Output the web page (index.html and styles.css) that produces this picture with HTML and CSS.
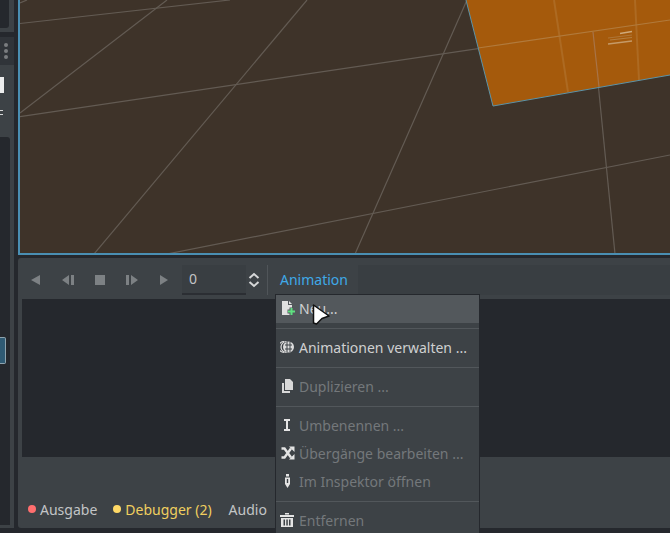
FILE: index.html
```html
<!DOCTYPE html>
<html lang="de">
<head>
    <meta charset="UTF-8">
    <title>Animation</title>
    <link rel="stylesheet" href="styles.css">
</head>
<body>
    <div class="app">
        <div class="left-dock">
            <div class="dock-top"><div class="dock-top-inner"></div></div>
            <div class="dock-tabs">
                <span class="dot"></span><span class="dot"></span><span class="dot"></span>
            </div>
            <div class="dock-body">
                <div class="dock-white"></div>
                <div class="dock-glyph"></div>
                <div class="dock-tree">
                    <div class="dock-selected"></div>
                </div>
            </div>
        </div>

        <div class="main">
            <div class="viewport">
                <svg class="viewport-svg" width="650" height="253" viewBox="20 0 650 253">
                    <g stroke="#635b53" stroke-width="1.200" fill="none">
                        <line x1="20" y1="23.5" x2="230" y2="0"/>
                        <line x1="20" y1="3" x2="27" y2="0"/>
                        <line x1="20" y1="113" x2="167" y2="0"/>
                        <line x1="20" y1="116.7" x2="670" y2="20"/>
                        <line x1="94" y1="254" x2="307" y2="0"/>
                        <line x1="355" y1="254" x2="467" y2="0"/>
                        <line x1="167" y1="254" x2="670" y2="155"/>
                        <line x1="593" y1="32" x2="615" y2="254"/>
                    </g>
                    <polygon points="466,0 670,0 670,75 493,106" fill="#a55a0c"/>
                    <g fill="none">
                        <line x1="554" y1="0" x2="568" y2="92" stroke="#ad6a22" stroke-width="2"/>
                        <line x1="635" y1="0" x2="639" y2="80" stroke="#ad6a22" stroke-width="2"/>
                        <line x1="478" y1="48" x2="670" y2="20" stroke="#b17a3c" stroke-width="1.200"/>
                        <line x1="593" y1="32" x2="599" y2="87" stroke="#a87448" stroke-width="1.200"/>
                        <polyline points="466,0 493,106 670,75" stroke="#5c93a8"/>
                        <line x1="620" y1="33.5" x2="632" y2="31.5" stroke="#cfa97a" stroke-width="1.500"/>
                        <line x1="608" y1="38" x2="632" y2="35" stroke="#b07c42" stroke-width=".8"/>
                        <line x1="610" y1="40" x2="632" y2="37.5" stroke="#b8884e" stroke-width=".8"/>
                        <line x1="608" y1="44" x2="632" y2="41" stroke="#c59a68" stroke-width="1.500"/>
                    </g>
                </svg>
            </div>

            <div class="bottom-panel">
                <div class="toolbar">
                    <span class="tool-btn">
                        <svg width="12" height="12" viewBox="0 0 12 12"><path d="M10 1v10L1 6z"/></svg>
                    </span>
                    <span class="tool-btn">
                        <svg width="14" height="12" viewBox="0 0 14 12"><path d="M8 1v10L1 6zM10 1h3v10h-3z"/></svg>
                    </span>
                    <span class="tool-btn">
                        <svg width="10" height="10" viewBox="0 0 10 10"><rect width="10" height="10"/></svg>
                    </span>
                    <span class="tool-btn">
                        <svg width="14" height="12" viewBox="0 0 14 12"><path d="M1 1h3v10H1zM6 1l7 5-7 5z"/></svg>
                    </span>
                    <span class="tool-btn">
                        <svg width="10" height="12" viewBox="0 0 10 12"><path d="M1 1v10l8-5z"/></svg>
                    </span>
                    <div class="spinbox">0</div>
                    <svg class="spin-arrows" width="12" height="16" viewBox="0 0 12 16">
                        <path d="M1.500 6L6 2l4.500 4M1.500 10L6 14l4.500-4" fill="none" stroke="#d6d7d8" stroke-width="2"/>
                    </svg>
                    <div class="tool-sep"></div>
                    <div class="anim-tab">Animation</div>
                    <div class="tool-fill"></div>
                </div>
                <div class="log-area"></div>
                <div class="tabs">
                    <span class="tab"><i class="tab-dot tab-dot-red"></i>Ausgabe</span>
                    <span class="tab tab-warn"><i class="tab-dot tab-dot-yellow"></i>Debugger (2)</span>
                    <span class="tab">Audio</span>
                </div>
            </div>
        </div>

        <div class="menu">
            <div class="menu-item menu-item-hover">
                <svg width="14" height="16" viewBox="0 0 14 16">
                    <path d="M1 1h6v4h4v10H1z" fill="#e0e0e0"/>
                    <path d="M8 1l3 3H8z" fill="#e0e0e0"/>
                    <path d="M6.500 11.500h8M10.500 7.500v8" stroke="#53585c" stroke-width="4"/>
                    <path d="M7 11.500h7M10.500 8v7" stroke="#5fe080" stroke-width="2"/>
                </svg>
                <span>Neu...</span>
            </div>
            <div class="menu-sep"></div>
            <div class="menu-item">
                <svg class="icon-left" width="14" height="14" viewBox="0 0 14 14">
                    <g fill="none" stroke="#dcdcdc" stroke-width="1.200">
                        <path d="M4 1.500A5.500 5.500 0 0 0 4 12.500"/>
                        <path d="M6.500 1.500A5.500 5.500 0 0 0 6.500 12.500"/>
                    </g>
                    <circle cx="8.500" cy="7" r="5.500" fill="#dcdcdc"/>
                    <path d="M5 5h7M5 9h7M7 2v10M10 2v10" stroke="#3d4246" fill="none"/>
                </svg>
                <span>Animationen verwalten ...</span>
            </div>
            <div class="menu-sep"></div>
            <div class="menu-item menu-item-off">
                <svg class="icon-left" width="14" height="14" viewBox="0 0 14 14" fill="#d8d8d8">
                    <path d="M5 0h5l3 3v8H5z"/>
                    <path d="M2 4h2v8h6v2H2z"/>
                </svg>
                <span>Duplizieren ...</span>
            </div>
            <div class="menu-sep"></div>
            <div class="menu-item menu-item-off">
                <svg class="icon-left" width="14" height="14" viewBox="0 0 14 14" fill="#e4e4e4">
                    <path d="M4 1h6v2H8v8h2v2H4v-2h2V3H4z"/>
                </svg>
                <span>Umbenennen ...</span>
            </div>
            <div class="menu-item menu-item-off">
                <svg width="14" height="14" viewBox="0 0 14 14" fill="none" stroke="#e4e4e4" stroke-width="2.400">
                    <path d="M0.500 2.500h3l6.500 9M0.500 11.500h3l6.500-9"/>
                    <path d="M8 0.500h5.500V6zM8 13.500h5.500V8z" fill="#e4e4e4" stroke="none"/>
                </svg>
                <span>Übergänge bearbeiten ...</span>
            </div>
            <div class="menu-item menu-item-off">
                <svg class="icon-left" width="14" height="14" viewBox="0 0 14 14" fill="#e4e4e4">
                    <rect x="6" y="0" width="3" height="2.500"/>
                    <path d="M5 3.500h5v6.500L7.500 14 5 10z"/>
                    <rect x="6.800" y="5" width="1.400" height="4" fill="#3d4246"/>
                </svg>
                <span>Im Inspektor öffnen</span>
            </div>
            <div class="menu-sep"></div>
            <div class="menu-item menu-item-off">
                <svg class="icon-left" width="14" height="14" viewBox="0 0 14 14" fill="#e4e4e4">
                    <path d="M0 2h14v2H0zM5 0h4v1.500H5z"/>
                    <path d="M1 5h12v9H1zM3.500 6.500v6h1.500v-6zM6.300 6.500v6h1.500v-6zM9 6.500v6h1.500v-6z" fill-rule="evenodd"/>
                </svg>
                <span>Entfernen</span>
            </div>
        </div>

        <svg class="cursor" width="22" height="24" viewBox="0 0 22 24">
            <path d="M2.500 2L18 13l-7 2.500L5.500 21 2.500 20z" fill="#fff" stroke="#111" stroke-width="1.500" stroke-linejoin="round"/>
        </svg>
    </div>
</body>
</html>
```

FILE: styles.css
```css
* {
    box-sizing: border-box;
}

html, body {
    margin: 0;
    padding: 0;
    height: 100%;
    overflow: hidden;
}

body {
    background-color: #25282d;
    font-family: "Noto Sans", sans-serif;
    font-size: 14px;
    color: #d6d7d8;
}

.app {
    display: flex;
    position: relative;
    height: 533px;
    overflow: hidden;
}

/* left dock, mostly cut off by the crop */
.left-dock {
    width: 14px;
    height: 528px;
    flex-shrink: 0;
    display: flex;
    flex-direction: column;
}

.dock-top {
    height: 32px;
    background-color: #3d4246;
    padding-right: 5px;
    padding-bottom: 4px;
}

.dock-top-inner {
    height: 100%;
    background-color: #25282d;
    border-bottom-right-radius: 3px;
}

.dock-tabs {
    height: 28px;
    margin-top: 5px;
    background-color: #303439;
    display: flex;
    flex-direction: column;
    align-items: flex-end;
    justify-content: center;
    gap: 2px;
    padding-right: 6px;
}

.dot {
    width: 4px;
    height: 4px;
    border-radius: 50%;
    background-color: #7a7d80;
}

.dock-body {
    flex: 1;
    background-color: #3d4246;
    display: flex;
    flex-direction: column;
}

.dock-white {
    width: 4px;
    height: 16px;
    margin-top: 12px;
    background-color: #eceded;
}

.dock-glyph {
    width: 3px;
    height: 5px;
    margin-top: 17px;
    border-top: 1px solid #d6d7d8;
    border-bottom: 1px solid #d6d7d8;
}

.dock-tree {
    position: relative;
    width: 10px;
    height: 388px;
    margin-top: 22px;
    background-color: #25282d;
    border-top-right-radius: 3px;
}

.dock-selected {
    position: absolute;
    top: 200px;
    left: 0;
    width: 6px;
    height: 27px;
    background-color: #2f5a73;
    border: 1px solid #8ea3ae;
    border-left: none;
    border-radius: 0 2px 2px 0;
}

.main {
    flex: 1;
    margin-left: 4px;
    min-width: 0;
}

.viewport {
    height: 255px;
    background-color: #3e3329;
    border-left: 2px solid #4a8fb3;
    border-bottom: 2px solid #4a8fb3;
}

.viewport-svg {
    display: block;
}

.bottom-panel {
    height: 270px;
    margin-top: 3px;
    background-color: #3d4246;
    border-radius: 3px 0 0 3px;
}

.toolbar {
    height: 41px;
    padding: 7px 0 4px 2px;
    display: flex;
    align-items: center;
}

.tool-btn {
    width: 32px;
    height: 30px;
    display: flex;
    align-items: center;
    justify-content: center;
}

.tool-btn svg {
    fill: #7d8184;
}

.spinbox {
    width: 64px;
    height: 30px;
    margin-left: 2px;
    padding: 4px 7px 0;
    background-color: #393e42;
    border-bottom: 2px solid #2b2e33;
    color: #c2c4c5;
    font-size: 14px;
}

.spin-arrows {
    margin-left: 2px;
}

.tool-sep {
    width: 1px;
    height: 30px;
    margin-left: 7px;
    background-color: #505559;
}

.anim-tab {
    width: 90px;
    height: 30px;
    line-height: 30px;
    padding-left: 12px;
    color: #3fa9e8;
}

.tool-fill {
    flex: 1;
    height: 30px;
    background-color: #393e42;
}

.log-area {
    height: 158px;
    margin-left: 4px;
    background-color: #25282d;
}

.tabs {
    height: 71px;
    padding: 33px 0 0 10px;
    display: flex;
    align-items: center;
    gap: 16px;
    color: #c3c5c6;
}

.tab {
    display: flex;
    align-items: center;
    white-space: nowrap;
}

.tab-warn {
    margin-right: 1px;
    color: #f0cf5f;
}

.tab-dot {
    width: 8px;
    height: 8px;
    margin-right: 4px;
    border-radius: 50%;
}

.tab-dot-red {
    background-color: #ff6e6e;
}

.tab-dot-yellow {
    background-color: #ffd966;
}

/* popup menu sits over the bottom panel */
.menu {
    position: absolute;
    left: 275px;
    top: 294px;
    width: 205px;
    height: 245px;
    background-color: #3d4246;
    border: 1px solid #25282d;
}

.menu-item {
    height: 28px;
    padding-left: 5px;
    padding-bottom: 2px;
    display: flex;
    align-items: center;
    gap: 4px;
    color: #cfd0d1;
    white-space: nowrap;
}

.menu-item svg {
    flex-shrink: 0;
}

.icon-left {
    margin-left: -1px;
    margin-right: 1px;
}

.menu-item-hover {
    background-color: #53585c;
}

.menu-item-off span {
    color: #74787b;
}

.menu-sep {
    height: 11px;
    padding-top: 5px;
}

.menu-sep::after {
    content: "";
    display: block;
    height: 1px;
    background-color: #52575b;
}

.cursor {
    position: absolute;
    left: 311px;
    top: 303px;
}
```
